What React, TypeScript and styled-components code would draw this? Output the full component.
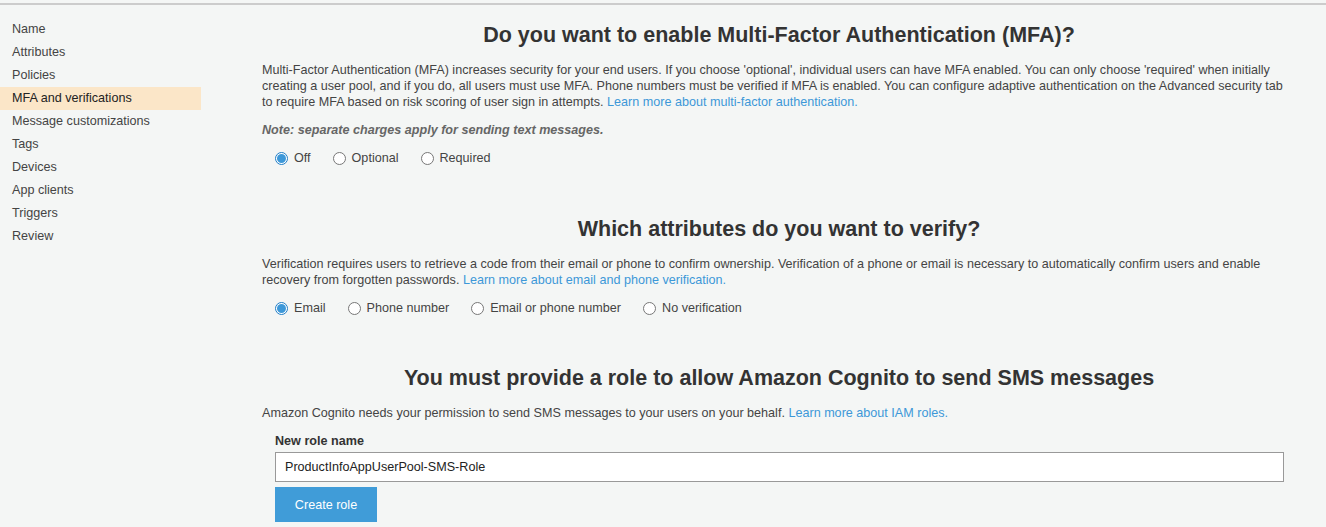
import React, { useState } from 'react';
import styled, { createGlobalStyle } from 'styled-components';

const GlobalStyle = createGlobalStyle`
  html, body {
    margin: 0;
    padding: 0;
    background: #f4f6f5;
  }
  body {
    font-family: Arial, "Liberation Sans", Helvetica, sans-serif;
    font-size: 12.6px;
    color: #444;
  }
`;

const Page = styled.div`
  border-top: 2px solid #ccc;
  margin-top: 3px;
  display: flex;
  min-height: 522px;
`;

const Sidebar = styled.ul`
  list-style: none;
  margin: 0;
  padding: 13px 0 0;
  width: 201px;
  flex: none;
`;

const NavItem = styled.li<{ $active?: boolean }>`
  height: 23px;
  line-height: 23px;
  padding-left: 12px;
  color: ${(p) => (p.$active ? '#222' : '#444')};
  background: ${(p) => (p.$active ? '#fbe6c8' : 'transparent')};
  cursor: pointer;
`;

const Main = styled.main`
  flex: none;
  width: 1034px;
  margin-left: 61px;
`;

const Section = styled.section<{ $gap: number }>`
  margin-bottom: ${(p) => p.$gap}px;
`;

const Heading = styled.h2`
  margin: 0;
  padding-top: 19px;
  height: 31px;
  line-height: 23px;
  text-align: center;
  font-size: 21.5px;
  font-weight: bold;
  color: #333;
`;

const Para = styled.p`
  margin: 7px 0 0;
  line-height: 16px;
`;

const Link = styled.a`
  color: #3d98d8;
  text-decoration: none;
`;

const Note = styled.p`
  margin: 13px 0 0;
  font-style: italic;
  font-weight: bold;
  color: #666;
`;

const RadioRow = styled.div<{ $top: number }>`
  display: flex;
  gap: 22px;
  margin-top: ${(p) => p.$top}px;
  padding-left: 13px;
`;

const RadioLabel = styled.label`
  display: flex;
  align-items: center;
  gap: 6px;
  height: 20px;
  color: #444;
  cursor: pointer;
`;

const RadioDot = styled.span<{ $checked: boolean }>`
  box-sizing: border-box;
  width: 13px;
  height: 13px;
  border-radius: 50%;
  border: 1px solid ${(p) => (p.$checked ? '#1f7ec7' : '#777')};
  background: #fff;
  display: flex;
  align-items: center;
  justify-content: center;
  &::after {
    content: '';
    display: ${(p) => (p.$checked ? 'block' : 'none')};
    width: 9px;
    height: 9px;
    border-radius: 50%;
    background: #3d98d8;
  }
`;

const FieldLabel = styled.div`
  margin: 12px 0 0 13px;
  font-weight: bold;
  color: #333;
  line-height: 16px;
`;

const TextInput = styled.input`
  display: block;
  box-sizing: border-box;
  margin: 3px 0 0 13px;
  width: 1009px;
  height: 30px;
  padding: 0 9px;
  border: 1px solid #999;
  background: #fff;
  font-family: Arial, "Liberation Sans", sans-serif;
  font-size: 12.6px;
  color: #222;
  outline: none;
`;

const Button = styled.button`
  display: block;
  margin: 5px 0 0 13px;
  width: 102px;
  height: 35px;
  border: none;
  background: #409cd8;
  color: #fff;
  font-family: Arial, "Liberation Sans", sans-serif;
  font-size: 12.6px;
  cursor: pointer;
`;

type RadioGroupProps = { options: string[]; value: string; onChange: (v: string) => void; top: number };

const RadioGroup = ({ options, value, onChange, top }: RadioGroupProps) => (
  <RadioRow $top={top}>
    {options.map((o) => (
      <RadioLabel key={o} onClick={() => onChange(o)}>
        <RadioDot $checked={o === value} />
        {o}
      </RadioLabel>
    ))}
  </RadioRow>
);

const NAV = [
  'Name',
  'Attributes',
  'Policies',
  'MFA and verifications',
  'Message customizations',
  'Tags',
  'Devices',
  'App clients',
  'Triggers',
  'Review',
];

export default function App() {
  const [mfa, setMfa] = useState('Off');
  const [verify, setVerify] = useState('Email');
  const [role, setRole] = useState('ProductInfoAppUserPool-SMS-Role');
  return (
    <>
      <GlobalStyle />
      <Page>
        <Sidebar>
          {NAV.map((n) => (
            <NavItem key={n} $active={n === 'MFA and verifications'}>
              {n}
            </NavItem>
          ))}
        </Sidebar>
        <Main>
          <Section $gap={31}>
            <Heading>Do you want to enable Multi-Factor Authentication (MFA)?</Heading>
            <Para>
              Multi-Factor Authentication (MFA) increases security for your end users. If you choose 'optional', individual
              users can have MFA enabled. You can only choose 'required' when initially creating a user pool, and if you do, all
              users must use MFA. Phone numbers must be verified if MFA is enabled. You can configure adaptive authentication on
              the Advanced security tab to require MFA based on risk scoring of user sign in attempts.{' '}
              <Link href="#">Learn more about multi-factor authentication.</Link>
            </Para>
            <Note>Note: separate charges apply for sending text messages.</Note>
            <RadioGroup options={['Off', 'Optional', 'Required']} value={mfa} onChange={setMfa} top={11} />
          </Section>
          <Section $gap={30}>
            <Heading>Which attributes do you want to verify?</Heading>
            <Para>
              Verification requires users to retrieve a code from their email or phone to confirm ownership. Verification of a
              phone or email is necessary to automatically confirm users and enable recovery from forgotten passwords.{' '}
              <Link href="#">Learn more about email and phone verification.</Link>
            </Para>
            <RadioGroup
              options={['Email', 'Phone number', 'Email or phone number', 'No verification']}
              value={verify}
              onChange={setVerify}
              top={10}
            />
          </Section>
          <Section $gap={0}>
            <Heading>You must provide a role to allow Amazon Cognito to send SMS messages</Heading>
            <Para>
              Amazon Cognito needs your permission to send SMS messages to your users on your behalf.{' '}
              <Link href="#">Learn more about IAM roles.</Link>
            </Para>
            <FieldLabel>New role name</FieldLabel>
            <TextInput value={role} onChange={(e) => setRole(e.target.value)} />
            <Button>Create role</Button>
          </Section>
        </Main>
      </Page>
    </>
  );
}
